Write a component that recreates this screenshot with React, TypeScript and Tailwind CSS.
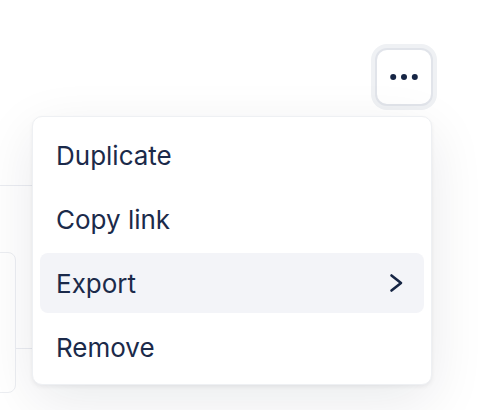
import React from 'react';

const items = ['Duplicate', 'Copy link', 'Export', 'Remove'];

function Dots() {
  return (
    <svg width="30" height="8" viewBox="0 0 30 8" fill="#162544">
      <circle cx="4.2" cy="4" r="3" />
      <circle cx="15" cy="4" r="3" />
      <circle cx="25.8" cy="4" r="3" />
    </svg>
  );
}

function Chevron() {
  return (
    <svg width="20" height="24" viewBox="0 0 20 24" fill="none" stroke="#162544" strokeWidth="2.6" strokeLinecap="round" strokeLinejoin="round">
      <polyline points="3.5,4.5 13,12 3.5,19.5" />
    </svg>
  );
}

export default function App() {
  return (
    <div className="relative w-full h-[410px] overflow-hidden bg-white font-['Inter',sans-serif]">
      {/* page content behind the menu */}
      <div className="h-[106px]" />
      <div className="w-[220px] h-[80px] border-b border-[#eaecf1]" />
      <div className="flex items-start mt-[66px] w-[220px]">
        <div className="w-[40px] -ml-[24px] h-[141px] rounded-lg border border-[#eceef2] bg-white shrink-0" />
        <div className="flex-1 mt-[96px] border-t border-[#eaecf1]" />
      </div>

      {/* actions button + dropdown */}
      <div className="absolute top-[48px] right-[51px]">
        <button className="w-[58px] h-[58px] flex items-center justify-center rounded-xl bg-white border-2 border-[#e1e4ea] ring-4 ring-[#eff1f4] shadow-sm">
          <Dots />
        </button>
        <div className="absolute top-[68px] right-[1px] w-[400px] rounded-[10px] border border-[#eef0f3] bg-white px-[7px] pt-[8px] pb-[7px] flex flex-col gap-1 shadow-[0_2px_4px_rgba(16,24,40,0.06),0_16px_56px_rgba(16,24,40,0.09)]">
          {items.map((label) => (
            <div
              key={label}
              className={
                label === 'Export'
                  ? 'h-[60px] px-4 flex items-center justify-between rounded-lg bg-[#f3f4f8] text-[26px] text-[#1b2a4a]'
                  : 'h-[60px] px-4 flex items-center justify-between rounded-lg text-[26px] text-[#1b2a4a]'
              }
            >
              <span>{label}</span>
              {label === 'Export' && <Chevron />}
            </div>
          ))}
        </div>
      </div>
    </div>
  );
}
